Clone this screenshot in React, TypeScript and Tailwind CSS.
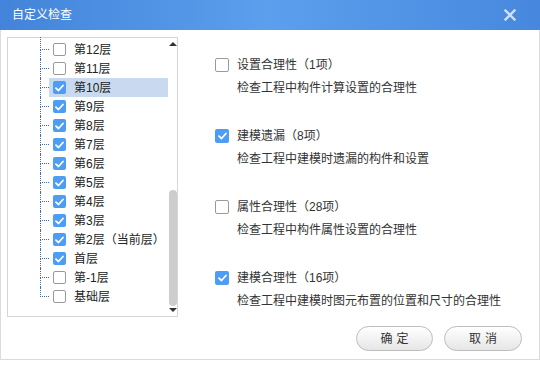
import type { JSX } from "react";

const FONT = "font-['Liberation_Sans','Noto_Sans_CJK_SC',sans-serif]";

interface Floor {
  label: string;
  checked: boolean;
  selected?: boolean;
}

const floors: Floor[] = [
  { label: "第12层", checked: false },
  { label: "第11层", checked: false },
  { label: "第10层", checked: true, selected: true },
  { label: "第9层", checked: true },
  { label: "第8层", checked: true },
  { label: "第7层", checked: true },
  { label: "第6层", checked: true },
  { label: "第5层", checked: true },
  { label: "第4层", checked: true },
  { label: "第3层", checked: true },
  { label: "第2层（当前层）", checked: true },
  { label: "首层", checked: true },
  { label: "第-1层", checked: false },
  { label: "基础层", checked: false },
];

const checks = [
  { title: "设置合理性（1项）", desc: "检查工程中构件计算设置的合理性", checked: false },
  { title: "建模遗漏（8项）", desc: "检查工程中建模时遗漏的构件和设置", checked: true },
  { title: "属性合理性（28项）", desc: "检查工程中构件属性设置的合理性", checked: false },
  { title: "建模合理性（16项）", desc: "检查工程中建模时图元布置的位置和尺寸的合理性", checked: true },
];

function CheckBox({ checked, size }: { checked: boolean; size: number }): JSX.Element {
  const box = size === 14 ? "w-[14px] h-[14px]" : "w-[13px] h-[13px]";
  if (checked) {
    return (
      <span className={`${box} shrink-0 rounded-[2px] bg-[#4d9df4] flex items-center justify-center`}>
        <svg width="9" height="8" viewBox="0 0 9 8" fill="none">
          <path d="M1 4.2 L3.5 6.5 L8 1.5" stroke="white" strokeWidth="1.8" strokeLinecap="round" strokeLinejoin="round" />
        </svg>
      </span>
    );
  }
  return <span className={`${box} shrink-0 rounded-[2px] border border-[#9a9a9a] bg-white`} />;
}

function FloorTree(): JSX.Element {
  return (
    <div className="flex shrink-0 w-[171px] h-[280px] border border-[#d6d6d6] bg-white">
      <div className="flex-1 pt-[2px]">
        {floors.map((f, i) => {
          const last = i === floors.length - 1;
          return (
            <div key={f.label} className="flex h-[19px] pl-[32px]">
              {/* tree connector */}
              <div className="w-[9px] flex flex-col">
                <div className={`border-l border-b border-dotted border-[#4169a8] ${i === 0 ? "-mt-[3px] h-[13px]" : "h-[10px]"}`} />
                <div className={`flex-1 ${last ? "" : "border-l border-dotted border-[#4169a8]"}`} />
              </div>
              <div
                className={`flex items-center gap-[8px] pl-[4px] ${
                  f.selected ? "w-[119px] bg-[#c9daf0]" : ""
                }`}
              >
                <CheckBox checked={f.checked} size={13} />
                <span className="text-[12px] text-[#222] whitespace-nowrap leading-none">{f.label}</span>
              </div>
            </div>
          );
        })}
      </div>
      {/* scrollbar */}
      <div className="w-[9px] flex flex-col items-center pt-[4px] pb-[4px]">
        <div className="w-0 h-0 border-l-[4px] border-r-[4px] border-b-[4px] border-l-transparent border-r-transparent border-b-[#333]" />
        <div className="flex-1" />
        <div className="w-[8px] h-[116px] rounded-[4px] bg-[#cdcdcd]" />
        <div className="mt-[2px] w-0 h-0 border-l-[4px] border-r-[4px] border-t-[4px] border-l-transparent border-r-transparent border-t-[#333]" />
      </div>
    </div>
  );
}

export default function App(): JSX.Element {
  return (
    <div className={`w-[540px] h-[369px] bg-white ${FONT}`}>
      <div className="w-[540px] h-[360px] border-l border-r border-b border-[#dcdcdc] flex flex-col">
        {/* title bar */}
        <div className="shrink-0 -mx-px h-[30px] flex items-center justify-between pl-[12px] pr-[24px] bg-gradient-to-r from-[#4384da] via-[#5b9fed] to-[#4788de]">
          <span className="text-[12px] text-white">自定义检查</span>
          <svg width="12" height="12" viewBox="0 0 12 12">
            <path d="M1.5 1.5 L10.5 10.5 M10.5 1.5 L1.5 10.5" stroke="#cfe1f8" strokeWidth="2.4" strokeLinecap="square" />
          </svg>
        </div>

        <div className="shrink-0 flex pl-[6px] pt-[7px]">
          <FloorTree />
          <div className="ml-[37px] pt-[18px]">
            {checks.map((c) => (
              <div key={c.title} className="mb-[28px] last:mb-0">
                <div className="flex items-center h-[20px] gap-[8px]">
                  <CheckBox checked={c.checked} size={14} />
                  <span className="text-[12px] text-[#333] whitespace-nowrap">{c.title}</span>
                </div>
                <div className="mt-[3px] h-[20px] flex items-center pl-[22px] text-[12px] text-[#333] whitespace-nowrap">
                  {c.desc}
                </div>
              </div>
            ))}
          </div>
        </div>

        <div className="shrink-0 flex justify-end gap-[11px] pr-[17px] mt-[9px]">
          <button className="w-[77px] h-[25px] rounded-full border border-[#bdbdbd] bg-gradient-to-b from-[#ffffff] to-[#e6e6e6] text-[12px] text-[#333] tracking-[4px] pl-[4px]">
            确定
          </button>
          <button className="w-[78px] h-[25px] rounded-full border border-[#bdbdbd] bg-gradient-to-b from-[#ffffff] to-[#e6e6e6] text-[12px] text-[#333] tracking-[4px] pl-[4px]">
            取消
          </button>
        </div>
      </div>
    </div>
  );
}
